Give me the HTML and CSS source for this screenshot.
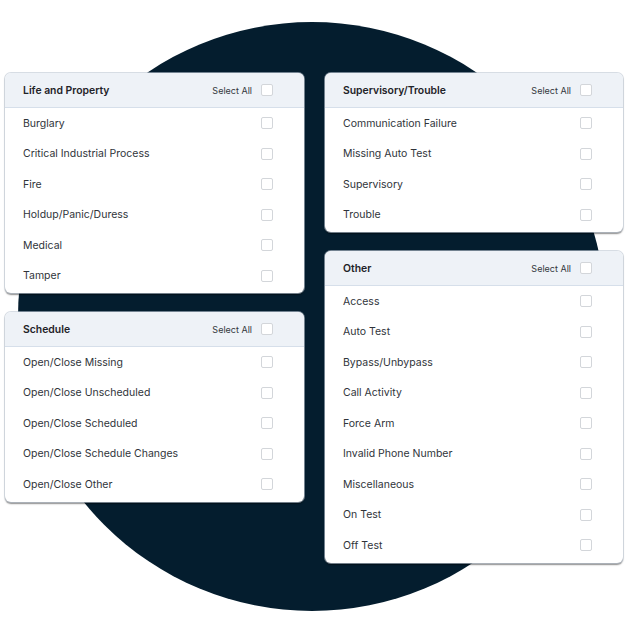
FILE: index.html
```html
<!DOCTYPE html>
<html>
<head>
<meta charset="utf-8">
<link rel="stylesheet" href="styles.css">
</head>
<body>
<div class="stage">
  <div class="circle"></div>
  <div class="grid">
    <div class="col">
      <div class="card">
        <div class="head"><span class="title">Life and Property</span><span class="all">Select All</span><span class="box"></span></div>
        <div class="list">
          <div class="row"><span class="label">Burglary</span><span class="box"></span></div>
          <div class="row"><span class="label">Critical Industrial Process</span><span class="box"></span></div>
          <div class="row"><span class="label">Fire</span><span class="box"></span></div>
          <div class="row"><span class="label">Holdup/Panic/Duress</span><span class="box"></span></div>
          <div class="row"><span class="label">Medical</span><span class="box"></span></div>
          <div class="row"><span class="label">Tamper</span><span class="box"></span></div>
        </div>
      </div>
      <div class="card">
        <div class="head"><span class="title">Schedule</span><span class="all">Select All</span><span class="box"></span></div>
        <div class="list">
          <div class="row"><span class="label">Open/Close Missing</span><span class="box"></span></div>
          <div class="row"><span class="label">Open/Close Unscheduled</span><span class="box"></span></div>
          <div class="row"><span class="label">Open/Close Scheduled</span><span class="box"></span></div>
          <div class="row"><span class="label">Open/Close Schedule Changes</span><span class="box"></span></div>
          <div class="row"><span class="label">Open/Close Other</span><span class="box"></span></div>
        </div>
      </div>
    </div>
    <div class="col">
      <div class="card">
        <div class="head"><span class="title">Supervisory/Trouble</span><span class="all">Select All</span><span class="box"></span></div>
        <div class="list">
          <div class="row"><span class="label">Communication Failure</span><span class="box"></span></div>
          <div class="row"><span class="label">Missing Auto Test</span><span class="box"></span></div>
          <div class="row"><span class="label">Supervisory</span><span class="box"></span></div>
          <div class="row"><span class="label">Trouble</span><span class="box"></span></div>
        </div>
      </div>
      <div class="card">
        <div class="head"><span class="title">Other</span><span class="all">Select All</span><span class="box"></span></div>
        <div class="list">
          <div class="row"><span class="label">Access</span><span class="box"></span></div>
          <div class="row"><span class="label">Auto Test</span><span class="box"></span></div>
          <div class="row"><span class="label">Bypass/Unbypass</span><span class="box"></span></div>
          <div class="row"><span class="label">Call Activity</span><span class="box"></span></div>
          <div class="row"><span class="label">Force Arm</span><span class="box"></span></div>
          <div class="row"><span class="label">Invalid Phone Number</span><span class="box"></span></div>
          <div class="row"><span class="label">Miscellaneous</span><span class="box"></span></div>
          <div class="row"><span class="label">On Test</span><span class="box"></span></div>
          <div class="row"><span class="label">Off Test</span><span class="box"></span></div>
        </div>
      </div>
    </div>
  </div>
</div>
</body>
</html>
```

FILE: styles.css
```css
html, body {
  margin: 0;
  padding: 0;
  background: #ffffff;
}
body {
  font-family: Inter, "Noto Sans", "Liberation Sans", sans-serif;
  color: #2f3338;
}
.stage {
  position: relative;
  width: 630px;
  height: 633px;
  overflow: hidden;
}
.circle {
  position: absolute;
  left: 18px;
  top: 22px;
  width: 588px;
  height: 589px;
  border-radius: 50%;
  background: #041d2e;
}
.grid {
  position: relative;
  display: grid;
  grid-template-columns: 299px 298px;
  column-gap: 21px;
  padding: 73px 0 0 5px;
  align-items: start;
}
.col {
  display: flex;
  flex-direction: column;
  gap: 19px;
}
.card {
  background: #ffffff;
  border-radius: 6px;
  box-shadow: 0 0 0 1px rgba(190, 200, 212, 0.6), 0 1.5px 1.5px rgba(0, 0, 0, 0.45);
  overflow: hidden;
  padding-bottom: 2px;
}
.head {
  display: flex;
  align-items: center;
  height: 34px;
  padding: 0 31px 0 18px;
  background: #eef2f7;
  border-bottom: 1px solid #d6dfea;
}
.title {
  flex: 1;
  font-size: 10.4px;
  font-weight: 600;
  color: #1f2328;
}
.all {
  font-size: 9px;
  color: #33373c;
  margin-right: 9px;
}
.row {
  display: flex;
  align-items: center;
  height: 30.5px;
  padding: 0 31px 0 18px;
}
.label {
  flex: 1;
  font-size: 10.5px;
  color: #30343a;
}
.box {
  width: 10px;
  height: 10px;
  border: 1px solid #d3d6da;
  border-radius: 2px;
  background: #ffffff;
  flex: none;
}
```
